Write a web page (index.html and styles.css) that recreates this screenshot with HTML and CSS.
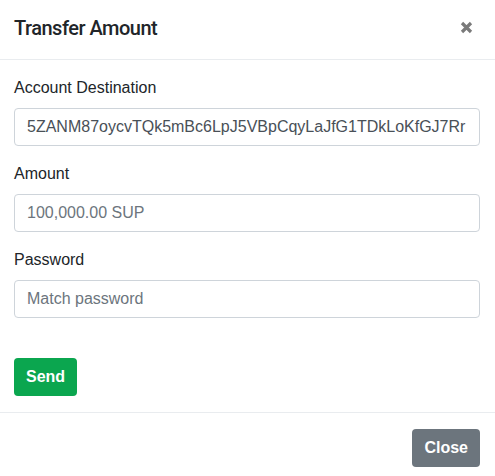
FILE: index.html
```html
<!DOCTYPE html>
<html>
<head>
<meta charset="utf-8">
<link rel="stylesheet" href="styles.css">
</head>
<body>
<div class="modal">
  <div class="modal-header">
    <h5 class="modal-title">Transfer Amount</h5>
    <button class="close" type="button" aria-label="Close">
      <svg width="13" height="13" viewBox="0 0 13 13"><path d="M2 2 L11 11 M11 2 L2 11" stroke="#7a7a7a" stroke-width="3.2" stroke-linecap="butt"/></svg>
    </button>
  </div>
  <div class="modal-body">
    <div class="form-group">
      <label class="form-label">Account Destination</label>
      <input class="form-control" type="text" value="5ZANM87oycvTQk5mBc6LpJ5VBpCqyLaJfG1TDkLoKfGJ7Rr">
    </div>
    <div class="form-group">
      <label class="form-label">Amount</label>
      <input class="form-control" type="text" placeholder="100,000.00 SUP">
    </div>
    <div class="form-group">
      <label class="form-label">Password</label>
      <input class="form-control" type="password" placeholder="Match password">
    </div>
    <div class="actions">
      <button class="btn btn-success" type="button">Send</button>
    </div>
  </div>
  <div class="modal-footer">
    <button class="btn btn-secondary" type="button">Close</button>
  </div>
</div>
</body>
</html>
```
FILE: styles.css
```css
html, body {
  margin: 0;
  padding: 0;
  background: #fff;
}
body {
  font-family: "Liberation Sans", Arial, sans-serif;
  font-size: 16px;
  line-height: 1.5;
  color: #212529;
}
.modal {
  width: 495px;
  background: #fff;
}
.modal-header {
  display: flex;
  justify-content: space-between;
  align-items: center;
  padding: 13px 15px 16px 14px;
  border-bottom: 1px solid #e9ecef;
}
.modal-title {
  margin: 0;
  font-family: Roboto, "Liberation Sans", Arial, sans-serif;
  font-size: 20px;
  line-height: 30px;
  font-weight: 500;
  letter-spacing: -0.5px;
  color: #212529;
}
.close {
  border: 0;
  background: transparent;
  padding: 0;
  margin: 0 7px 2px 0;
  display: flex;
  cursor: pointer;
}
.modal-body {
  padding: 16px 15px 16px 14px;
}
.form-group {
  display: flex;
  flex-direction: column;
  margin-bottom: 16px;
}
.form-label {
  display: block;
  margin-bottom: 8px;
  line-height: 24px;
}
.form-control {
  box-sizing: border-box;
  height: 38px;
  width: 100%;
  padding: 6px 12px;
  font-family: inherit;
  font-size: 16px;
  line-height: 24px;
  color: #495057;
  background: #fff;
  border: 1px solid #ced4da;
  border-radius: 4px;
  outline: none;
}
.form-control::placeholder {
  color: #6c757d;
  opacity: 1;
}
.actions {
  display: flex;
  margin-top: 40px;
}
.btn {
  box-sizing: border-box;
  height: 38px;
  padding: 0 12px;
  border: 0;
  border-radius: 4px;
  font-family: inherit;
  font-size: 16px;
  font-weight: 700;
  color: #fff;
  cursor: pointer;
}
.btn-success {
  background: #0ba64f;
}
.btn-secondary {
  background: #6c757d;
}
.modal-footer {
  display: flex;
  justify-content: flex-end;
  padding: 16px 15px 16px 14px;
  border-top: 1px solid #e9ecef;
}
```
